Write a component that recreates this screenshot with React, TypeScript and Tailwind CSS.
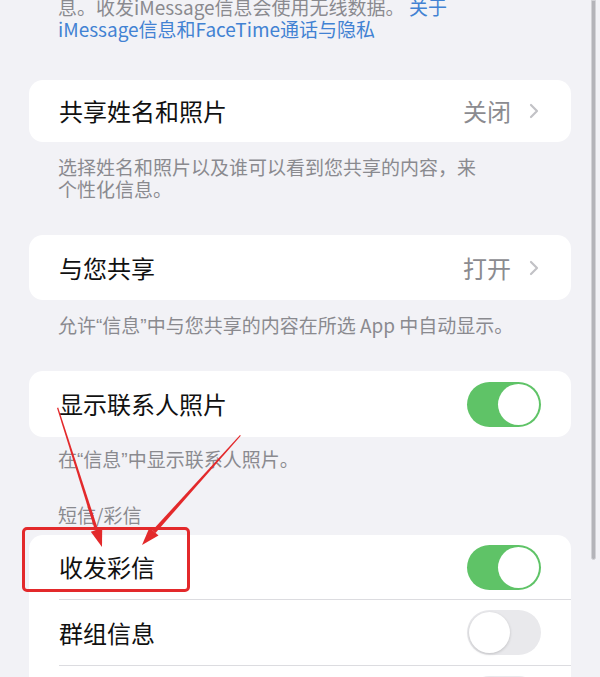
const FONT = { fontFamily: '"Noto Sans CJK SC", "Noto Sans", sans-serif' };

function Q({ children }: { children: string }) {
  return (
    <span
      className="inline-block h-[22px] align-top leading-[24px]"
      style={{ fontFamily: '"Liberation Sans", sans-serif' }}
    >
      {children}
    </span>
  );
}

function Chevron() {
  return (
    <svg width="10" height="16" viewBox="0 0 10 16" className="ml-[18px]">
      <polyline
        points="2,2 8,8 2,14"
        fill="none"
        stroke="#c2c2c6"
        strokeWidth="2.2"
        strokeLinecap="round"
        strokeLinejoin="round"
      />
    </svg>
  );
}

function Toggle({ on }: { on: boolean }) {
  return (
    <div
      className={`flex h-[45px] w-[74px] shrink-0 items-center rounded-full p-[2px] ${
        on ? "justify-end bg-[#5fc367]" : "justify-start bg-[#e9e9ec]"
      }`}
    >
      <div
        className={`h-[41px] w-[41px] rounded-full bg-white ${
          on ? "" : "shadow-[0_1px_3px_rgba(0,0,0,0.18)]"
        }`}
      />
    </div>
  );
}

function NavRow({ label, value }: { label: string; value: string }) {
  return (
    <div className="flex h-full items-center pl-[30px] pr-[32px]">
      <span className="flex-1 text-[24px] leading-[30px] text-[#111]">{label}</span>
      <span className="text-[24px] leading-[30px] text-[#8b8b90]">{value}</span>
      <Chevron />
    </div>
  );
}

function ToggleRow({ label, on }: { label: string; on: boolean }) {
  return (
    <div className="flex h-full items-center pl-[30px] pr-[30px]">
      <span className="flex-1 text-[24px] leading-[30px] text-[#111]">{label}</span>
      <Toggle on={on} />
    </div>
  );
}

function Footer({ children, className = "" }: { children: React.ReactNode; className?: string }) {
  return (
    <div className={`px-[58px] text-[19px] leading-[22px] text-[#8a8a8f] ${className}`}>
      {children}
    </div>
  );
}

export default function App() {
  return (
    <div className="relative h-[677px] w-[600px] overflow-hidden bg-[#f2f2f6]" style={FONT}>
      <div className="-mt-[4px] px-[58px] text-[19px] leading-[22px] text-[#8a8a8f]">
        息。收发iMessage信息会使用无线数据。 <span className="text-[#4282d3]">关于</span>
        <br />
        <span className="text-[#4282d3]">iMessage信息和FaceTime通话与隐私</span>
      </div>

      <div className="mx-[29px] mt-[40px] h-[62px] rounded-[14px] bg-white">
        <NavRow label="共享姓名和照片" value="关闭" />
      </div>
      <Footer className="pt-[14px]">
        选择姓名和照片以及谁可以看到您共享的内容，来
        <br />
        个性化信息。
      </Footer>

      <div className="mx-[29px] mt-[35px] h-[65px] rounded-[14px] bg-white">
        <NavRow label="与您共享" value="打开" />
      </div>
      <Footer className="h-[36px] pt-[14px]">
        允许<Q>“</Q>信息<Q>”</Q>中与您共享的内容在所选 App 中自动显示。
      </Footer>

      <div className="mx-[29px] mt-[35px] h-[66px] rounded-[14px] bg-white">
        <ToggleRow label="显示联系人照片" on />
      </div>
      <Footer className="h-[33px] pt-[11px]">
        在<Q>“</Q>信息<Q>”</Q>中显示联系人照片。
      </Footer>

      <Footer className="mt-[34px]">短信/彩信</Footer>

      <div className="mx-[29px] mt-[9px] rounded-[14px] bg-white">
        <div className="h-[64px]">
          <ToggleRow label="收发彩信" on />
        </div>
        <div className="ml-[30px] h-px bg-[#dcdce0]" />
        <div className="h-[65px]">
          <ToggleRow label="群组信息" on={false} />
        </div>
        <div className="ml-[30px] h-px bg-[#dcdce0]" />
        <div className="h-[65px]">
          <ToggleRow label="显示主题栏" on={false} />
        </div>
      </div>

      {/* scroll indicator */}
      <div className="absolute left-[591px] top-0 h-[560px] w-[5px] rounded-b-full border border-[#d2d2d6] bg-[#b4b4b9]" />

      {/* annotation: red box */}
      <div className="absolute left-[22px] top-[527px] h-[65px] w-[168px] rounded-[5px] border-[3px] border-[#e3292b]" />

      {/* annotation: arrows */}
      <svg className="pointer-events-none absolute left-0 top-0" width="600" height="677">
        <polygon points="57,408 58.2,407.6 98,529.5 95,530.5" fill="#e3292b" />
        <polygon points="102,547 90.8,531.7 102.2,528" fill="#e3292b" />
        <polygon points="240,435 240.8,435.7 155.5,533 152.5,530.2" fill="#e3292b" />
        <polygon points="142,545 149.5,527.6 158.5,535.6" fill="#e3292b" />
      </svg>
    </div>
  );
}
